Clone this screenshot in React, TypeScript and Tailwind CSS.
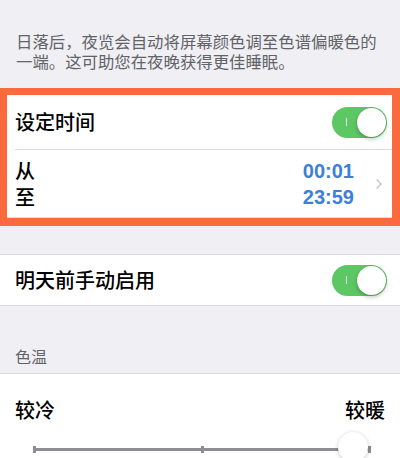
import { ChevronRight } from "lucide-react";

const font = { fontFamily: '"Noto Sans CJK SC", "Noto Sans", sans-serif' };

function Toggle() {
  return (
    <div className="relative w-[55px] h-[31px] rounded-full bg-[#5dc863] shrink-0">
      {/* on-label bar */}
      <div className="absolute left-[14px] top-[11px] w-[1px] h-[8px] bg-white/80" />
      <div className="absolute right-[1px] top-[1px] w-[29px] h-[29px] rounded-full bg-white shadow-[0_2px_4px_rgba(0,0,0,0.25),0_0_0_0.5px_rgba(0,0,0,0.08)]" />
    </div>
  );
}

function Tick() {
  return <div className="w-[3px] h-[7px] bg-[#8e8e93] shrink-0" />;
}

export default function App() {
  return (
    <div className="w-[400px] h-[458px] overflow-hidden bg-[#efeff4]" style={font}>
      {/* footer note */}
      <div className="pt-[31px] px-[16px] text-[16.4px] leading-[20px] text-[#636367] whitespace-nowrap">
        <p>日落后，夜览会自动将屏幕颜色调至色谱偏暖色的</p>
        <p>一端。这可助您在夜晚获得更佳睡眠。</p>
      </div>

      {/* scheduled group */}
      <div className="mt-[17px] bg-white border-[#fa6a3c] border-l-[7px] border-t-[7px] border-r-[8px] border-b-[8px]">
        <div className="h-[54px] pl-[8px] pr-[5px] flex items-center justify-between">
          <span className="text-[20px] font-medium text-black">设定时间</span>
          <Toggle />
        </div>
        <div className="ml-[8px] h-[1px] bg-[#dcdce0]" />
        <div className="h-[68px] pl-[8px] pr-[5px] flex items-center border-b border-[#dcdce0]">
          <div className="flex-1 flex flex-col gap-[4px] text-[20px] leading-[22px] font-medium text-black">
            <span>从</span>
            <span>至</span>
          </div>
          <div
            className="flex flex-col items-end text-[20px] leading-[26px] font-semibold text-[#3d7fd9]"
            style={{ fontFamily: '"Liberation Sans", Arial, sans-serif' }}
          >
            <span>00:01</span>
            <span>23:59</span>
          </div>
          <ChevronRight className="ml-[17px] w-[16px] h-[16px] text-[#c4c4c8]" strokeWidth={2} />
        </div>
      </div>

      {/* manual enable */}
      <div className="mt-[28px] h-[52px] bg-white border-y border-[#d8d8dc] pl-[15px] pr-[13px] flex items-center justify-between">
        <span className="text-[20px] font-medium text-black">明天前手动启用</span>
        <Toggle />
      </div>

      {/* color temperature */}
      <div className="pt-[40px] pb-[7px] px-[15px] text-[16px] leading-[20px] text-[#636367]">色温</div>
      <div className="bg-white border-t border-[#d8d8dc] h-[200px]">
        <div className="pt-[23px] px-[15px] flex justify-between text-[20px] leading-[26px] font-medium text-black">
          <span>较冷</span>
          <span>较暖</span>
        </div>
        <div className="relative mt-[23px] ml-[33px] w-[338px] flex items-center">
          <Tick />
          <div className="flex-1 h-[3px] bg-[#8e8e93]" />
          <Tick />
          <div className="flex-1 h-[3px] bg-[#8e8e93]" />
          <Tick />
          <div className="absolute left-[305px] top-[-14px] w-[30px] h-[30px] rounded-full bg-white shadow-[0_1px_4px_rgba(0,0,0,0.22)]" />
        </div>
      </div>
    </div>
  );
}
